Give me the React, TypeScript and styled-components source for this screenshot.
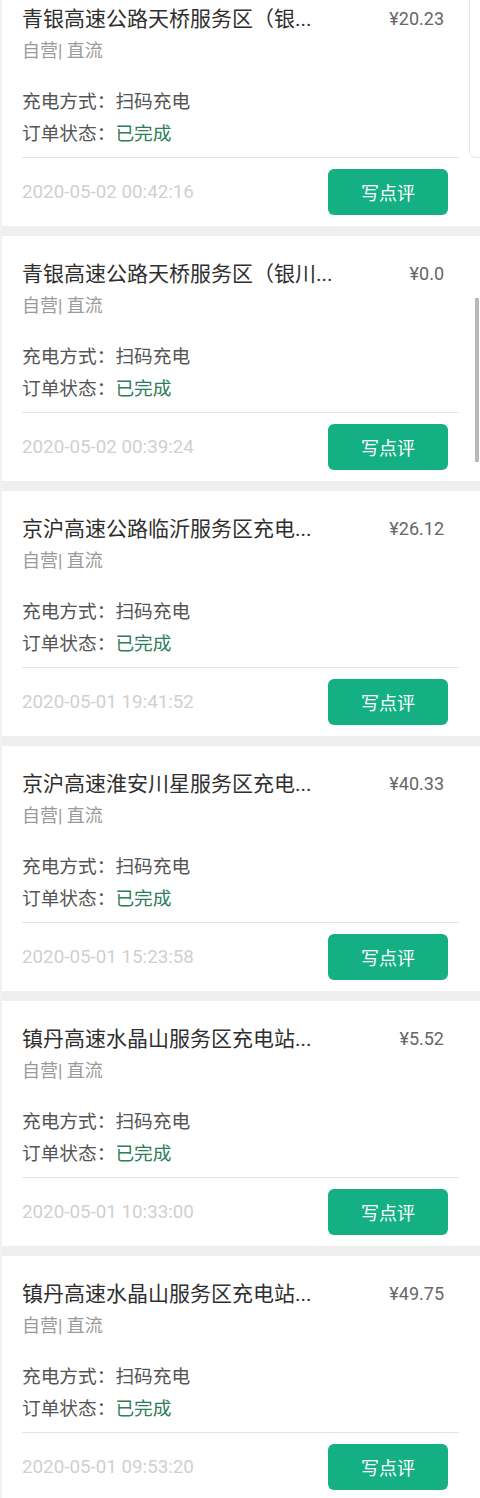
import React from "react";
import styled, { createGlobalStyle } from "styled-components";

const GlobalStyle = createGlobalStyle`
	html, body {
		margin: 0;
		padding: 0;
		background: #ffffff;
		overflow: hidden;
	}
	body {
		font-family: Roboto, "Noto Sans CJK SC", "Noto Sans", sans-serif;
		-webkit-font-smoothing: antialiased;
		text-spacing-trim: space-all;
	}
`;

const Screen = styled.div`
	position: relative;
	width: 480px;
	height: 1498px;
	overflow: hidden;
	background: #ffffff;
`;

const List = styled.div`
	display: flex;
	flex-direction: column;
	margin-top: -19.5px;
	border-left: 2px solid #f2f2f2;
`;

const Card = styled.div`
	display: flex;
	flex-direction: column;
	background: #ffffff;
	padding: 24px 21px 11px 20px;
	border-bottom: 10.5px solid #efefef;
`;

const TitleRow = styled.div`
	display: flex;
	align-items: flex-start;
	justify-content: space-between;
`;

const Title = styled.div`
	font-size: 21px;
	line-height: 28px;
	color: #2f2f2f;
	white-space: nowrap;
`;

const Price = styled.div`
	font-size: 18px;
	line-height: 28px;
	color: #666666;
	margin-right: 15px;
`;

const Tags = styled.div`
	margin-top: 6px;
	font-size: 18px;
	line-height: 24px;
	color: #9a9a9a;
`;

const Info = styled.div`
	margin-top: 23px;
	display: flex;
	flex-direction: column;
`;

const InfoLine = styled.div`
	font-size: 18.7px;
	line-height: 32px;
	color: #555555;
`;

const Status = styled.span<{ done: boolean }>`
	color: ${({ done }) => (done ? "#2e7d5b" : "#555555")};
`;

const Divider = styled.div`
	margin-top: 7px;
	height: 1px;
	background: #e4e4e4;
`;

const Footer = styled.div`
	margin-top: 11px;
	display: flex;
	align-items: center;
	justify-content: space-between;
`;

const DateText = styled.div`
	font-size: 18.8px;
	color: #d0d0d0;
`;

const ReviewButton = styled.button`
	width: 120px;
	height: 46px;
	margin-right: 11px;
	border: none;
	border-radius: 6px;
	background: #14b084;
	color: #ffffff;
	font-family: inherit;
	font-size: 18px;
	cursor: pointer;
`;

const EdgePanel = styled.div`
	position: absolute;
	left: 469px;
	top: -20px;
	width: 30px;
	height: 176px;
	border: 1px solid #e6e6e6;
	border-radius: 7px;
	background: #ffffff;
`;

const ScrollThumb = styled.div`
	position: absolute;
	right: 1px;
	top: 298px;
	width: 4px;
	height: 164px;
	background: #b8b8b8;
`;

type Order = {
	title: string;
	price: string;
	time: string;
};

const ORDERS: Order[] = [
	{ title: "青银高速公路天桥服务区（银...", price: "¥20.23", time: "2020-05-02 00:42:16" },
	{ title: "青银高速公路天桥服务区（银川...", price: "¥0.0", time: "2020-05-02 00:39:24" },
	{ title: "京沪高速公路临沂服务区充电...", price: "¥26.12", time: "2020-05-01 19:41:52" },
	{ title: "京沪高速淮安川星服务区充电...", price: "¥40.33", time: "2020-05-01 15:23:58" },
	{ title: "镇丹高速水晶山服务区充电站...", price: "¥5.52", time: "2020-05-01 10:33:00" },
	{ title: "镇丹高速水晶山服务区充电站...", price: "¥49.75", time: "2020-05-01 09:53:20" },
];

function OrderCard({ order }: { order: Order }): JSX.Element {
	return (
		<Card>
			<TitleRow>
				<Title>{order.title}</Title>
				<Price>{order.price}</Price>
			</TitleRow>
			<Tags>自营| 直流</Tags>
			<Info>
				<InfoLine>充电方式：扫码充电</InfoLine>
				<InfoLine>
					订单状态：<Status done>已完成</Status>
				</InfoLine>
			</Info>
			<Divider />
			<Footer>
				<DateText>{order.time}</DateText>
				<ReviewButton>写点评</ReviewButton>
			</Footer>
		</Card>
	);
}

export default function App(): JSX.Element {
	return (
		<Screen>
			<GlobalStyle />
			<List>
				{ORDERS.map((o, i) => (
					<OrderCard key={i} order={o} />
				))}
			</List>
			<EdgePanel />
			<ScrollThumb />
		</Screen>
	);
}
